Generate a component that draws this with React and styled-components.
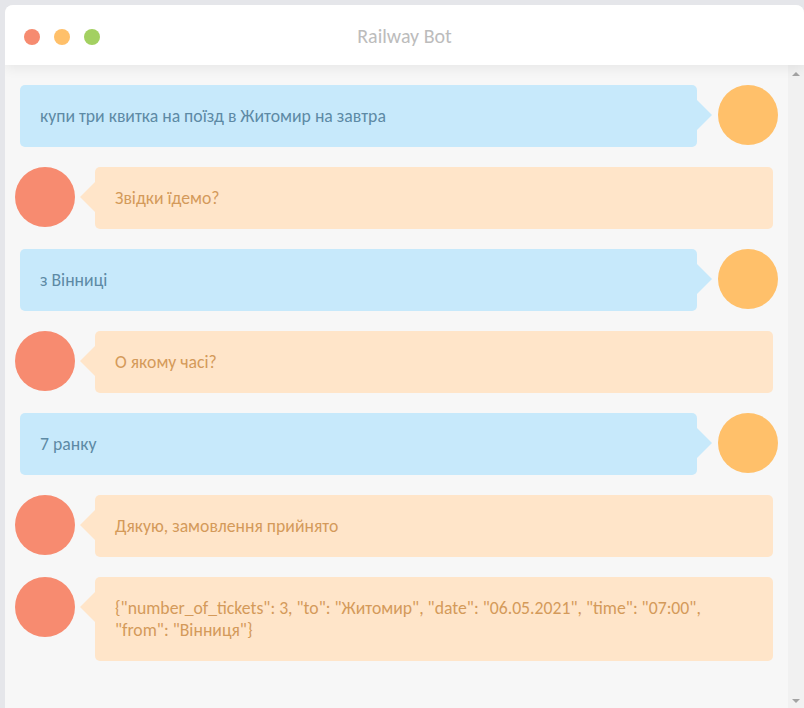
import React from 'react';
import styled, { createGlobalStyle } from 'styled-components';

const messages = [
  { from: 'user', text: 'купи три квитка на поїзд в Житомир на завтра' },
  { from: 'bot', text: 'Звідки їдемо?' },
  { from: 'user', text: 'з Вінниці' },
  { from: 'bot', text: 'О якому часі?' },
  { from: 'user', text: '7 ранку' },
  { from: 'bot', text: 'Дякую, замовлення прийнято' },
  {
    from: 'bot',
    text: '{"number_of_tickets": 3, "to": "Житомир", "date": "06.05.2021", "time": "07:00", "from": "Вінниця"}',
  },
];

const App = () => (
  <>
    <GlobalStyle />
    <Window>
      <TitleBar>
        <Dots>
          <Dot color="#f68b70" />
          <Dot color="#ffc06a" />
          <Dot color="#a3d061" />
        </Dots>
        <Title>Railway Bot</Title>
      </TitleBar>
      <ChatBody>
        <ChatArea>
          {messages.map((m, i) => (
            <MessageRow key={i} user={m.from === 'user'}>
              <Avatar user={m.from === 'user'} />
              <Bubble user={m.from === 'user'}>{m.text}</Bubble>
            </MessageRow>
          ))}
        </ChatArea>
        <Scrollbar>
          <Arrow />
          <Arrow down />
        </Scrollbar>
      </ChatBody>
    </Window>
  </>
);

export default App;

// region STYLES

const GlobalStyle = createGlobalStyle`
  html, body {
    margin: 0;
    padding: 0;
    height: 100%;
    overflow: hidden;
    background: #e5e6ea;
    font-family: Carlito, "Open Sans", "Noto Sans", sans-serif;
  }
`;

const Window = styled.div`
  margin: 5px 0 0 5px;
  height: calc(100vh - 5px);
  display: flex;
  flex-direction: column;
  background: #f7f7f7;
  border-radius: 8px 8px 0 0;
  overflow: hidden;
`;

const TitleBar = styled.div`
  position: relative;
  z-index: 1;
  flex: 0 0 60px;
  display: flex;
  align-items: center;
  justify-content: center;
  background: #ffffff;
  box-shadow: 0 3px 12px rgba(0, 0, 0, 0.07);
`;

const Dots = styled.div`
  position: absolute;
  left: 19px;
  top: 24px;
  display: flex;
  gap: 14px;
`;

const Dot = styled.span`
  width: 16px;
  height: 16px;
  border-radius: 50%;
  background: ${p => p.color};
`;

const Title = styled.div`
  font-size: 20px;
  color: #bcbcbc;
  margin-top: 2px;
`;

const ChatBody = styled.div`
  flex: 1;
  display: flex;
  min-height: 0;
`;

const ChatArea = styled.div`
  flex: 1;
  overflow: hidden;
  padding: 20px 10px;
  display: flex;
  flex-direction: column;
  gap: 20px;
`;

const Scrollbar = styled.div`
  flex: 0 0 16px;
  background: #f1f1f1;
  display: flex;
  flex-direction: column;
  justify-content: space-between;
  align-items: center;
  padding: 7px 0 5px;
`;

const Arrow = styled.span`
  width: 0;
  height: 0;
  border-left: 4px solid transparent;
  border-right: 4px solid transparent;
  ${p => (p.down ? 'border-top' : 'border-bottom')}: 4px solid #a3a3a3;
`;

const MessageRow = styled.div`
  display: flex;
  flex-direction: ${p => (p.user ? 'row-reverse' : 'row')};
  align-items: flex-start;
`;

const Avatar = styled.div`
  flex: 0 0 60px;
  height: 60px;
  border-radius: 50%;
  background: ${p => (p.user ? '#ffc06a' : '#f78b70')};
`;

const Bubble = styled.div`
  position: relative;
  flex: 1;
  margin: ${p => (p.user ? '0 21px 0 5px' : '0 5px 0 20px')};
  padding: 20px;
  border-radius: 5px;
  font-size: 17.7px;
  line-height: 22px;
  background: ${p => (p.user ? '#c7e9fb' : '#ffe5c9')};
  color: ${p => (p.user ? '#5d8aa5' : '#d49a5a')};

  &::after {
    content: '';
    position: absolute;
    top: 15px;
    ${p => (p.user ? 'left: 100%;' : 'right: 100%;')}
    border-top: 15px solid transparent;
    border-bottom: 15px solid transparent;
    ${p => (p.user ? 'border-left' : 'border-right')}: 15px solid
      ${p => (p.user ? '#c7e9fb' : '#ffe5c9')};
  }
`;

// endregion
